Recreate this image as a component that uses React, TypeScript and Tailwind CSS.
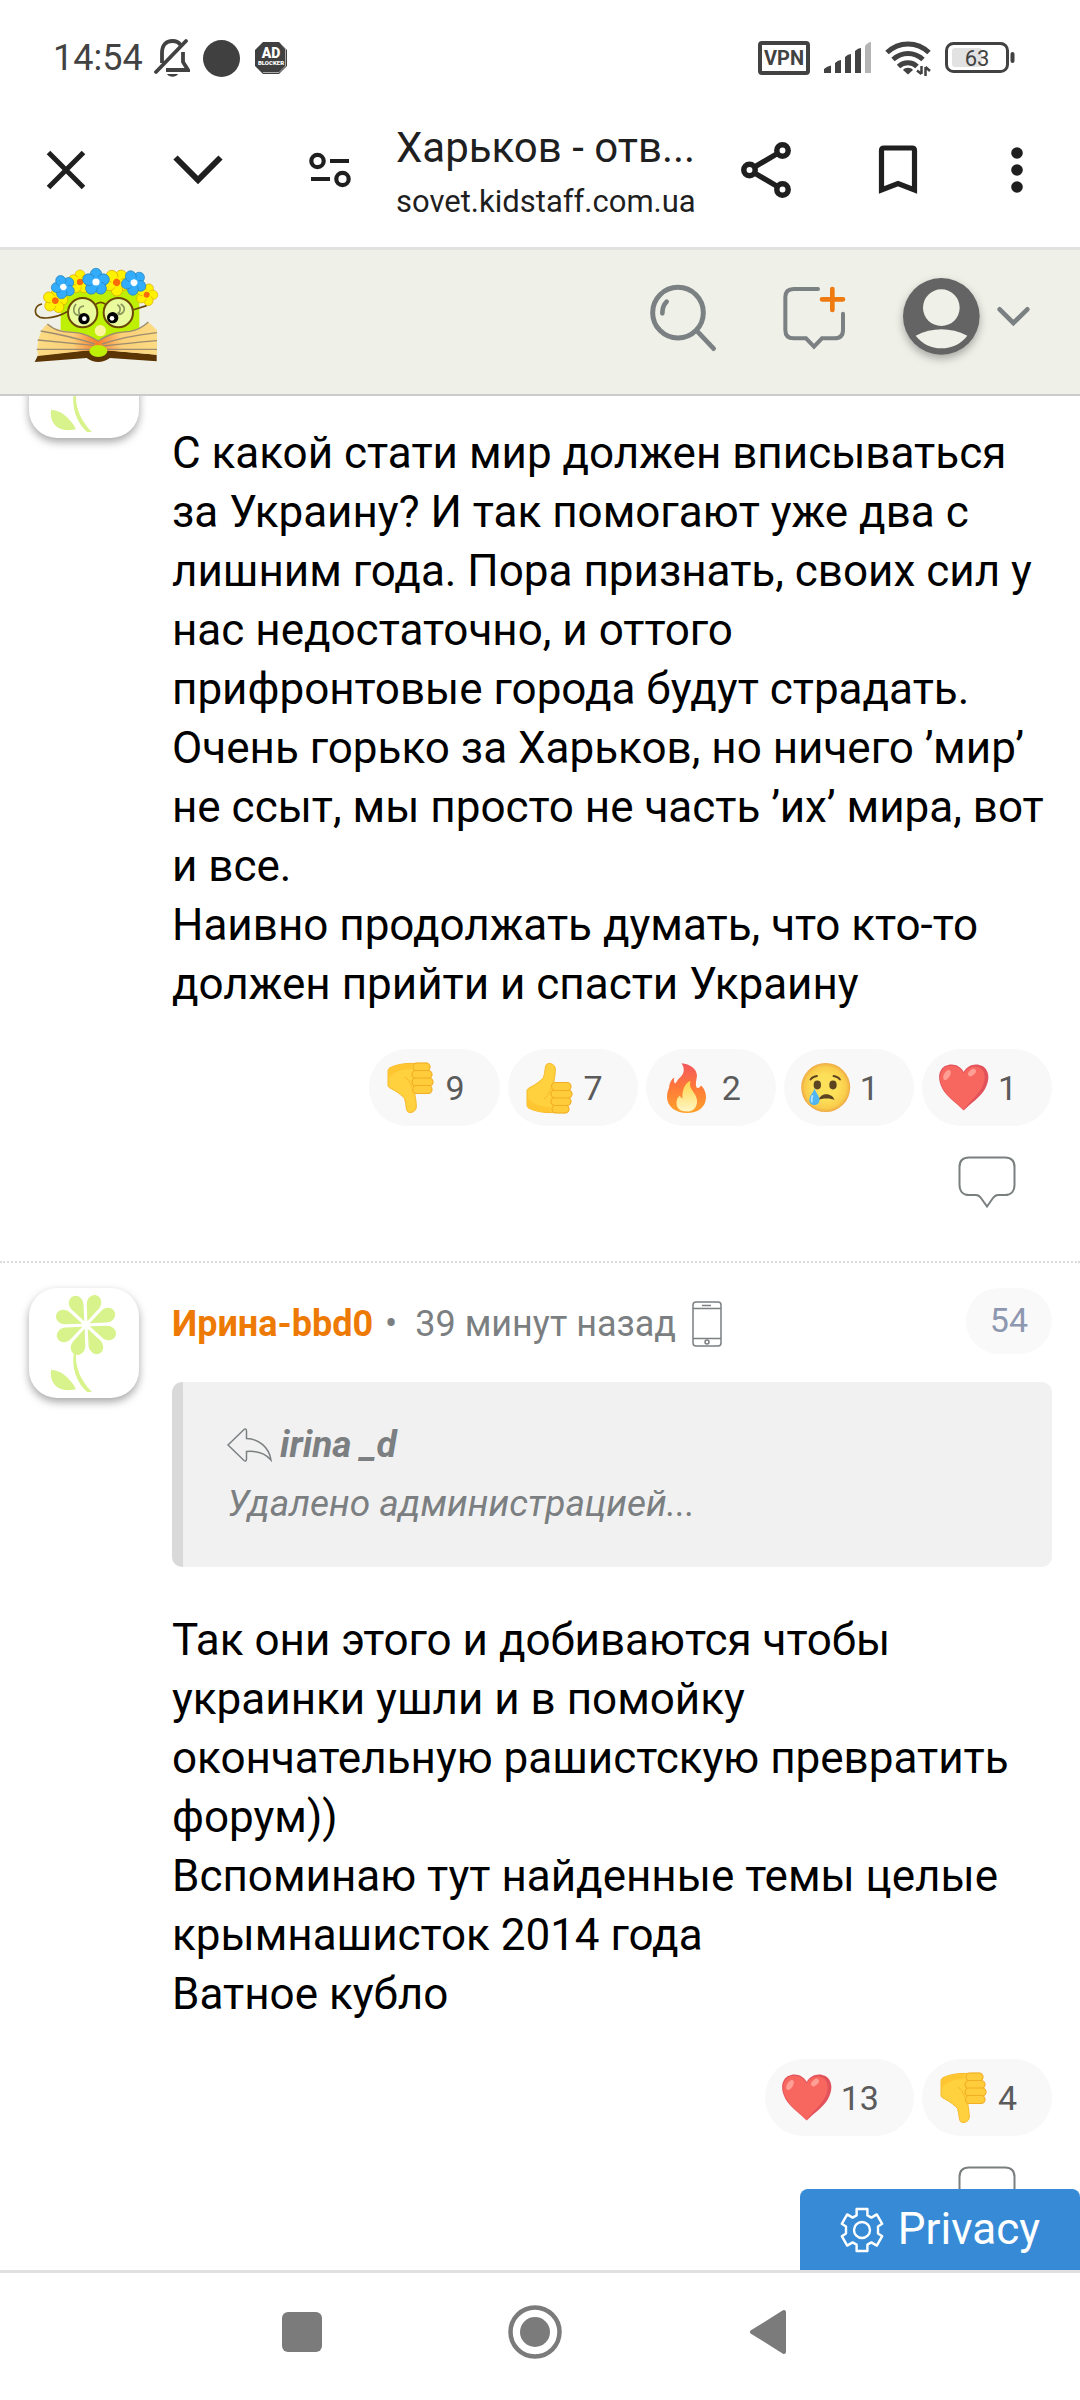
import React from 'react';

/* ---------- Reaction icons ---------- */

const ThumbIcon: React.FC<{ down?: boolean }> = ({ down }) => (
  <svg viewBox="0 0 52 52" className={down ? 'w-[52px] h-[52px] -scale-y-100' : 'w-[52px] h-[52px]'}>
    <path
      d="M3 29C3 27 4 26.500 6 25.500C12 22.500 17 18.500 19.500 15.500C20.500 12 21 9 21.300 5.500C21.800 2.200 23.500 1.200 26 1.500C29.500 2 31.300 4.500 31.300 7C31.300 12 30.500 16 29.700 21L30 46L42 50.800L22 50.500C15 50 8 48 4.500 46C3.200 45 3 44 3 42Z"
      fill="#FFD13F" stroke="#F7B92B" strokeWidth="1"
    />
    <path d="M3.500 36C9 42 16 45 26 45L27 50L17 50C11 49 6 47 4 45Z" fill="#FFC632" />
    <g fill="#FFCC3B" stroke="#F2AE24" strokeWidth="1.200">
      <rect x="28" y="43" width="17" height="8" rx="4" />
      <rect x="27" y="35.500" width="20" height="8" rx="4" />
      <rect x="27" y="28" width="21" height="8" rx="4" />
      <rect x="27.500" y="20.500" width="19.500" height="8" rx="4" />
    </g>
    <path d="M28 25C25 29 26 33 20 37" fill="none" stroke="#F8BE33" strokeWidth="1.200" />
  </svg>
);

const FireIcon = () => (
  <svg viewBox="0 0 52 52" className="w-[52px] h-[52px]">
    <defs>
      <linearGradient id="flame" x1="0" y1="0" x2="0" y2="1">
        <stop offset="0" stopColor="#F4585D" />
        <stop offset="0.500" stopColor="#FF7A38" />
        <stop offset="1" stopColor="#FFA32B" />
      </linearGradient>
      <linearGradient id="flameCore" x1="0" y1="0" x2="0" y2="1">
        <stop offset="0" stopColor="#FFD54A" />
        <stop offset="1" stopColor="#FFF6C4" />
      </linearGradient>
    </defs>
    <path
      d="M19.500 1.300C28 2 35 7 35 14C34.500 18 33 22 34.500 25.500C36.500 26.500 38 25.500 39 23.500C42 26 44.300 31 44 36C43.500 45 36 51 25 51C13 51 5 44 5 35C5 31 6 28 7 26C7.500 21 9 17.500 12.300 15.500C11.500 19 12 20.500 13.200 21.500C15 20 15 18 18 15.500C23 11 22.500 6 19.500 1.300Z"
      fill="url(#flame)"
    />
    <path
      d="M28.500 18.800C27 25 29.500 27 32 31C34 34 35.500 37 35 41C34 47 30 49.500 25 49.500C18 49.500 14.500 46 14.500 41C14.500 37 16 35 18 33.500C18.500 35 19 36 20.500 36.500C20 29 22 22 28.500 18.800Z"
      fill="url(#flameCore)"
    />
  </svg>
);

const CryIcon = () => (
  <svg viewBox="0 0 52 52" className="w-[52px] h-[52px]">
    <defs>
      <radialGradient id="face">
        <stop offset="0.500" stopColor="#FDE05A" />
        <stop offset="0.850" stopColor="#F9CC4B" />
        <stop offset="1" stopColor="#EFA945" />
      </radialGradient>
    </defs>
    <circle cx="25.700" cy="25.500" r="24.500" fill="url(#face)" />
    <g fill="#5C4322">
      <ellipse cx="17.300" cy="23" rx="3.700" ry="4.400" />
      <ellipse cx="33" cy="23" rx="3.700" ry="4.400" />
    </g>
    <g fill="none" stroke="#5C4322" strokeWidth="1.800" strokeLinecap="round">
      <path d="M10.500 17.500C12 15.500 14 14.300 17 14" />
      <path d="M33.500 14C36.500 14.300 38.500 15.500 40 17.500" />
    </g>
    <path d="M18.500 38C20 34 23 32.300 26.500 32.300C30 32.300 33.500 34.500 34.500 38C32 36.800 29 36.300 26 36.500C23 36.500 20.500 37 18.500 38Z" fill="#5C4322" />
    <path d="M14.500 26.500C16 31 19.500 34 19.500 38C19.500 41 17 43 14.300 43C11.500 43 9.300 41 9.300 38C9.300 34 13 31 14.500 26.500Z" fill="#4FB6F2" />
    <path d="M12.500 34C11.500 36 11 37.500 12 39.500" stroke="#B5E1FB" strokeWidth="1.800" strokeLinecap="round" fill="none" />
  </svg>
);

const HeartIcon = () => (
  <svg viewBox="0 0 52 52" className="w-[52px] h-[52px]">
    <path
      d="M25.700 48.500C19 41.500 9 35 4.500 27C-1 17 0.500 8 7 4C14 0.500 22 3 25.700 10C29.500 3 37.500 0.500 44.500 4C51 8 52.500 17 47 27C42.500 35 32.500 41.500 25.700 48.500Z"
      fill="#E2525A"
    />
    <path
      d="M25.700 48C19 41 9.500 35 5 26.500C0.500 17 1.500 9 7.500 5C14 2 22 4.500 25.500 11.500C29.500 5 36 3 41.500 5.500C48 9 48 18 44 25.500C39.500 34 31 40 25.700 48Z"
      fill="#F8675F"
    />
    <g fill="#FF9E94">
      <ellipse cx="9" cy="13" rx="3" ry="5.500" transform="rotate(32 9 13)" />
      <ellipse cx="34" cy="10.500" rx="2.800" ry="4.600" transform="rotate(48 34 10.500)" />
    </g>
  </svg>
);

type ReactionKind = 'down' | 'up' | 'fire' | 'cry' | 'heart';

const reactionIcons: Record<ReactionKind, React.ReactNode> = {
  down: <ThumbIcon down />,
  up: <ThumbIcon />,
  fire: <FireIcon />,
  cry: <CryIcon />,
  heart: <HeartIcon />,
};

const Reactions: React.FC<{ items: { kind: ReactionKind; count: number }[] }> = ({ items }) => (
  <div className="mt-[35px] flex justify-end gap-2">
    {items.map(({ kind, count }) => (
      <button
        key={kind}
        className="flex h-[77px] items-center gap-2 rounded-full bg-[#f8f8f8] pl-4 pr-[35px] text-[34px] leading-10 text-[#5b5b5b]"
      >
        {reactionIcons[kind]}
        <span>{count}</span>
      </button>
    ))}
  </div>
);

const ReplyButton = () => (
  <div className="mt-[30px] flex justify-end pr-9">
    <button aria-label="Ответить">
      <svg viewBox="0 0 58 53" className="h-[53px] w-[58px]" fill="none" stroke="#7a7f80" strokeWidth="2">
        <path d="M11 1.500H47C53 1.500 56.500 5 56.500 11V29C56.500 35 53 39 47 39H40C37.500 39 36.500 40 35 42L29 50.500L23 42C21.500 40 20.500 39 18 39H11C5 39 1.500 35 1.500 29V11C1.500 5 5 1.500 11 1.500Z" />
      </svg>
    </button>
  </div>
);

/* ---------- Post ---------- */

const FlowerAvatar = () => (
  <a
    href="#user"
    aria-label="Профиль"
    className="block h-[110px] w-[110px] shrink-0 overflow-hidden rounded-[28px] bg-white shadow-[0_4px_8px_rgba(0,0,0,0.35)]"
  >
    <svg viewBox="0 0 110 110" className="h-[110px] w-[110px]" fill="#d8f28c">
      <g transform="translate(57 37)">
        {[6, 51, 96, 141, 186, 231, 276, 321].map((deg) => (
          <path key={deg} transform={`rotate(${deg + 14})`} d="M0 -4L-6.500 -20C-8.500 -26 -5 -31.500 0 -31.500C5 -31.500 8.500 -26 6.500 -20Z" />
        ))}
      </g>
      <path d="M45 64C42 80 48 95 58 104H63C52 93 46 80 47 64Z" />
      <path d="M22 82C32 82 41 90 47 101C34 105 20 99 22 82Z" />
    </svg>
  </a>
);

const Post: React.FC<{ className?: string; head?: React.ReactNode; children: React.ReactNode }> = ({
  className = '',
  head,
  children,
}) => (
  <article className={`flex gap-[33px] border-b-2 border-dotted border-[#dcdcdc] pl-[29px] pr-7 pt-[25px] pb-[52px] ${className}`}>
    <FlowerAvatar />
    <div className="min-w-0 flex-1">
      <div className="mb-7 flex h-[66px] items-center">{head}</div>
      {children}
    </div>
  </article>
);

/* ---------- Bars ---------- */

const StatusBar = () => (
  <div className="flex h-[92px] items-center justify-between pl-[53px] pr-[65px] pt-6 text-[#424242]">
    <div className="flex items-center">
      <span className="text-[36px] leading-10">14:54</span>
      <svg viewBox="0 0 36 40" className="ml-[11px] h-10 w-9" fill="none" stroke="#424242" strokeWidth="3.800">
        <path d="M8 25V15C8 7 12 3 18.500 3C22 3 25 4.500 26.500 7M29 14V24L34 32H12" />
        <path d="M2 34L32 3" strokeLinecap="round" />
        <path d="M13 36H24C22 39.500 15 39.500 13 36Z" fill="#424242" stroke="none" />
      </svg>
      <span className="ml-[13px] h-[37px] w-[37px] rounded-full bg-[#404040]" />
      <svg viewBox="0 0 34 34" className="ml-[14px] h-[34px] w-[34px]">
        <path d="M9 1H25L33 9V25L25 33H9L1 25V9Z" fill="#404040" />
        <path d="M27 3L31.500 8V25L25 31.500H9" fill="none" stroke="#c8c8c8" strokeWidth="0.800" />
        <text x="17" y="16.500" textAnchor="middle" fill="#fff" fontSize="14" fontWeight="900" fontFamily="Roboto">AD</text>
        <text x="17" y="24" textAnchor="middle" fill="#fff" fontSize="6" fontWeight="900" fontFamily="Roboto">BLOCKER</text>
      </svg>
    </div>
    <div className="flex items-center">
      <span className="flex h-[34px] w-[52px] items-center justify-center rounded-[4px] border-4 border-[#424242] text-[20px] font-bold leading-6">
        VPN
      </span>
      <svg viewBox="0 0 48 32" className="ml-[14px] h-8 w-12" fill="#424242">
        <path d="M0 31V27Q3 24 7 23.500V31Z" />
        <path d="M11 31V21Q14 18 17 18V31Z" />
        <path d="M21 31V15Q24 12 27 12V31Z" />
        <path d="M31 31V9Q34 6 37 6V31Z" />
        <path d="M41 31V4Q44 0 47 0V31Z" fill="#b5b5b5" />
      </svg>
      <svg viewBox="0 0 46 36" className="ml-[13px] h-9 w-[46px]" fill="none" stroke="#424242" strokeWidth="5">
        <path d="M2 12.500C14 1 32 1 44 12.500" />
        <path d="M8 19.500C17 11.500 29 11.500 38 19.500" />
        <path d="M13.500 26.500C19 21.500 27 21.500 32 26.500" />
        <path d="M18 30C20 27 26 27 28 30L23 34.500Z" fill="#424242" stroke="none" />
        <path d="M36.500 26V34M36.500 34L32 30.500M40.500 36V27M40.500 27L45 31" strokeWidth="2.500" />
      </svg>
      <svg viewBox="0 0 70 32" className="ml-[14px] h-8 w-[70px]">
        <rect x="1.500" y="1.500" width="61" height="28" rx="7" fill="none" stroke="#424242" strokeWidth="3" />
        <rect x="7" y="6" width="30" height="19" rx="3" fill="#e2e2e2" />
        <rect x="65.500" y="10" width="4" height="11" rx="2" fill="#424242" />
        <text x="32" y="23.500" textAnchor="middle" fill="#424242" fontSize="22" fontFamily="Roboto">63</text>
      </svg>
    </div>
  </div>
);

const BrowserBar = () => (
  <div className="flex h-[158px] items-center border-b-[3px] border-[#e1e1df] pr-2 text-[#1f1f1f]">
    <button aria-label="Закрыть" className="flex w-[132px] shrink-0 justify-center">
      <svg viewBox="0 0 40 40" className="h-10 w-10" stroke="currentColor" strokeWidth="5">
        <path d="M2.500 2.500L37.500 37.500M37.500 2.500L2.500 37.500" />
      </svg>
    </button>
    <button aria-label="Свернуть" className="flex w-[132px] shrink-0 justify-center">
      <svg viewBox="0 0 50 30" className="h-[30px] w-[50px]" fill="none" stroke="currentColor" strokeWidth="6">
        <path d="M2.500 2.500L25 25L47.500 2.500" />
      </svg>
    </button>
    <button aria-label="Сведения о сайте" className="flex w-[132px] shrink-0 justify-center">
      <svg viewBox="0 0 42 36" className="h-9 w-[42px]" fill="none" stroke="currentColor" strokeWidth="4.200">
        <circle cx="8.500" cy="9" r="6.200" />
        <path d="M21 9H40M2 27H21" />
        <circle cx="33.500" cy="27" r="6.200" />
      </svg>
    </button>
    <div className="min-w-0 flex-1 whitespace-nowrap pt-2">
      <div className="text-[42px] leading-[56px]">Харьков - отв...</div>
      <div className="text-[31px] leading-[52px]">sovet.kidstaff.com.ua</div>
    </div>
    <button aria-label="Поделиться" className="flex w-[132px] shrink-0 justify-center">
      <svg viewBox="0 0 50 56" className="h-14 w-[50px]" fill="none" stroke="currentColor" strokeWidth="5.500">
        <circle cx="41.500" cy="8.500" r="5.700" />
        <circle cx="8.500" cy="28" r="5.700" />
        <circle cx="41.500" cy="47.500" r="5.700" />
        <path d="M13.500 25L36.500 11.500M13.500 31L36.500 44.500" />
      </svg>
    </button>
    <button aria-label="Добавить в закладки" className="flex w-[132px] shrink-0 justify-center">
      <svg viewBox="0 0 40 50" className="h-[50px] w-10" fill="none" stroke="currentColor" strokeWidth="5.200">
        <path d="M3.500 45V5.500Q3.500 3 6 3H34Q36.500 3 36.500 5.500V45L20 38.500Z" />
      </svg>
    </button>
    <button aria-label="Ещё" className="flex w-[108px] shrink-0 justify-center pr-[3px]">
      <svg viewBox="0 0 12 46" className="h-[46px] w-3" fill="currentColor">
        <circle cx="6" cy="6" r="5.800" />
        <circle cx="6" cy="23" r="5.800" />
        <circle cx="6" cy="40" r="5.800" />
      </svg>
    </button>
  </div>
);

const flowers: { x: number; y: number; size: number; blue: boolean; turn: number }[] = [
  { x: 76, y: 122, size: 1, blue: false, turn: 10 },
  { x: 150, y: 66, size: 0.95, blue: false, turn: 0 },
  { x: 350, y: 104, size: 0.88, blue: false, turn: 20 },
  { x: 260, y: 67, size: 1.08, blue: false, turn: 35 },
  { x: 100, y: 81, size: 0.95, blue: true, turn: 50 },
  { x: 312, y: 68, size: 1, blue: true, turn: 45 },
  { x: 198, y: 66, size: 1.08, blue: true, turn: 0 },
];

const Logo = () => (
  <svg viewBox="0 0 405 372" className="h-[124px] w-[135px]">
    <defs>
      <linearGradient id="page" x1="0" x2="1">
        <stop offset="0" stopColor="#fbdc84" />
        <stop offset="0.300" stopColor="#fbcf78" />
        <stop offset="0.500" stopColor="#f97b2c" />
        <stop offset="0.700" stopColor="#fbcf78" />
        <stop offset="1" stopColor="#fbdc84" />
      </linearGradient>
    </defs>
    <path d="M92 100Q210 60 328 100V240H92Z" fill="#bdf004" />
    <path d="M14 306L24 286L200 268L380 284V304L240 294Q204 318 170 294Z" fill="#5b3504" />
    <path d="M24 288C18 250 28 210 52 192C100 226 150 204 205 243C255 208 320 226 355 186L381 210V284L240 272H165Z" fill="url(#page)" />
    <g fill="none" stroke="#9c8c70" strokeWidth="4">
      <path d="M52 192C80 216 100 216 140 218C170 222 190 234 205 243C250 214 270 218 300 214C325 210 340 200 355 186" />
      <path d="M32 213Q120 228 195 252M23 240Q110 248 190 256M20 268H180" />
      <path d="M381 218Q290 228 216 252M381 242Q290 250 220 258M381 268H230" />
    </g>
    <ellipse cx="205" cy="273" rx="27" ry="18" fill="#bdf004" />
    <g fill="#e9fb9c" stroke="#6b4708" strokeWidth="6">
      <circle cx="158" cy="158" r="44" />
      <circle cx="265" cy="158" r="44" />
    </g>
    <g fill="none" stroke="#6b4708" strokeWidth="5">
      <path d="M196 134Q212 120 228 134M308 150L350 137M114 154Q70 180 30 172C8 162 14 136 36 132" />
    </g>
    <g fill="none" stroke="#87945c" strokeWidth="5">
      <path d="M138 132C124 152 134 166 148 166M162 138C142 140 142 160 156 168" />
      <path d="M262 134C276 142 270 160 262 160M272 132C290 142 284 162 264 164" />
    </g>
    <circle cx="162" cy="176" r="17" fill="#000" />
    <circle cx="248" cy="173" r="17" fill="#000" />
    <circle cx="163" cy="176" r="7" fill="#fff" />
    <circle cx="246" cy="175" r="7" fill="#fff" />
    <circle cx="211" cy="212" r="17" fill="#fdf59b" />
    {flowers.map((f) => (
      <g key={f.x} transform={`translate(${f.x} ${f.y}) rotate(${f.turn}) scale(${f.size})`}>
        {[0, 72, 144, 216, 288].map((a) => (
          <ellipse
            key={a}
            cy="-21"
            rx="16"
            ry="17"
            transform={`rotate(${a})`}
            fill={f.blue ? '#33adfb' : '#fff200'}
            stroke={f.blue ? '#2480b8' : '#d9a800'}
            strokeWidth="2"
          />
        ))}
        <circle r="15" fill={f.blue ? '#33adfb' : '#fff200'} />
        <circle r="10" fill={f.blue ? '#fff' : '#fb6a0a'} />
      </g>
    ))}
  </svg>
);

const SiteHeader = () => (
  <header className="flex h-[146px] items-center border-b-2 border-[#cbcbcb] bg-[#eff0e8] pl-[30px] pr-12">
    <a href="#home" aria-label="Kidstaff">
      <Logo />
    </a>
    <nav className="ml-auto flex items-center">
      <button aria-label="Поиск">
        <svg viewBox="84 132 216 228" className="h-[76px] w-[72px]" fill="none" stroke="#7b8082" strokeLinecap="round">
          <circle cx="174" cy="218" r="76" strokeWidth="15" />
          <path d="M232 274L281 326" strokeWidth="14" />
          <path d="M127 220Q127 198 140 185" strokeWidth="14" />
        </svg>
      </button>
      <button aria-label="Новая тема" className="ml-[60px]">
        <svg viewBox="480 132 204 228" className="h-[76px] w-[68px]" fill="none" strokeWidth="12" strokeLinecap="round">
          <path
            d="M594 147H521Q496 147 496 172V270Q496 295 521 295H558L582 320L606 295H643Q669 295 669 270V221"
            stroke="#7b8082"
          />
          <path d="M637 147V210M606 178H669" stroke="#ee7a10" strokeWidth="14" />
        </svg>
      </button>
      <button aria-label="Меню пользователя" className="ml-[52px] flex items-center gap-3">
        <svg viewBox="840 132 246 228" className="h-[76px] w-[82px] overflow-visible drop-shadow-[0_4px_4px_rgba(0,0,0,0.3)]">
          <circle cx="964" cy="229" r="115" fill="#646464" />
          <circle cx="964" cy="203" r="55" fill="#eff0e8" />
          <path d="M887 287Q964 249 1042 287C1022 312 996 325 964 325C932 325 908 312 887 287Z" fill="#eff0e8" />
        </svg>
        <svg viewBox="1122 132 114 228" className="h-[76px] w-[38px]" fill="none" stroke="#7b8082" strokeWidth="14" strokeLinecap="round">
          <path d="M1139 208L1180 249L1222 208" />
        </svg>
      </button>
    </nav>
  </header>
);

const NavBar = () => (
  <footer className="flex h-[130px] shrink-0 items-center border-t-[3px] border-[#e0e0e0] bg-white pb-[10px] pl-[186px] pr-[196px]">
    <button aria-label="Недавние" className="flex flex-1 justify-center">
      <span className="h-10 w-10 rounded-[6px] bg-[#7b7b7b]" />
    </button>
    <button aria-label="Домой" className="flex flex-1 justify-center">
      <svg viewBox="0 0 54 54" className="h-[54px] w-[54px]">
        <circle cx="27" cy="27" r="24.500" fill="none" stroke="#7b7b7b" strokeWidth="4.500" />
        <circle cx="27" cy="27" r="15" fill="#7b7b7b" />
      </svg>
    </button>
    <button aria-label="Назад" className="flex flex-1 justify-center">
      <svg viewBox="0 0 38 46" className="h-[46px] w-[38px]">
        <path d="M3 23L35 3V43Z" fill="#7b7b7b" stroke="#7b7b7b" strokeWidth="4" strokeLinejoin="round" />
      </svg>
    </button>
  </footer>
);

export default function App() {
  return (
    <div className="flex h-screen flex-col bg-white font-[Roboto,sans-serif]">
      <StatusBar />
      <BrowserBar />
      <SiteHeader />

      <main className="relative min-h-0 flex-1 overflow-hidden text-[44px] leading-[59px] text-black">
        {/* First post is partly scrolled under the header */}
        <Post className="-mt-[93px]">
          <p className="pt-[2px]">
            С какой стати мир должен вписываться за Украину? И так помогают уже два с лишним года. Пора признать,
            своих сил у нас недостаточно, и оттого прифронтовые города будут страдать. Очень горько за Харьков, но
            ничего ’мир’ не ссыт, мы просто не часть ’их’ мира, вот и все.
            <br />
            Наивно продолжать думать, что кто-то должен прийти и спасти Украину
          </p>
          <Reactions
            items={[
              { kind: 'down', count: 9 },
              { kind: 'up', count: 7 },
              { kind: 'fire', count: 2 },
              { kind: 'cry', count: 1 },
              { kind: 'heart', count: 1 },
            ]}
          />
          <ReplyButton />
        </Post>

        <Post
          head={
            <div className="flex w-full items-center text-[36px] leading-[60px] text-[#7b7f81]">
              <div className="flex items-center pt-[6px]">
                <a href="#irina" className="font-bold text-[#ee7a06]">
                  Ирина-bbd0
                </a>
                <span className="ml-3">•</span>
                <span className="ml-[18px]">39 минут назад</span>
                <svg viewBox="0 0 30 46" className="ml-4 h-[46px] w-[30px]" fill="none" stroke="#7b7f81" strokeWidth="1.500">
                  <rect x="1" y="1" width="28" height="44" rx="3" />
                  <path d="M1 7.500H29M1 37.500H29M10 4.500H19" />
                  <circle cx="15" cy="41" r="2" />
                </svg>
              </div>
              <span className="ml-auto h-[66px] rounded-full bg-[#f9f9f9] px-6 text-[34px] leading-[64px] text-[#8d97b0]">
                54
              </span>
            </div>
          }
        >
          <blockquote className="mb-[42px] rounded-[10px] border-l-[11px] border-[#d9d9d9] bg-[#f1f1f1] px-11 pb-[34px] pt-[33px] text-[37px] italic leading-[59px] text-[#7b7f81]">
            <div className="flex items-center gap-2 font-bold">
              <svg viewBox="0 0 45 34" className="h-[34px] w-[45px]" fill="none" stroke="#7b7f81" strokeWidth="1.500">
                <path d="M1 17L17 1.500C18.500 0.500 19.500 1 19.500 3V10.500C32 11 42 19 44 32C38 25 30 22.500 19.500 23.500V31C19.500 33 18.500 33.500 17 32.500Z" />
              </svg>
              irina _d
            </div>
            <div>Удалено администрацией...</div>
          </blockquote>
          <p className="pt-[2px]">
            Так они этого и добиваются чтобы украинки ушли и в помойку окончательную рашистскую превратить форум))
            <br />
            Вспоминаю тут найденные темы целые крымнашисток 2014 года
            <br />
            Ватное кубло
          </p>
          <Reactions
            items={[
              { kind: 'heart', count: 13 },
              { kind: 'down', count: 4 },
            ]}
          />
          <ReplyButton />
        </Post>

        <button className="absolute bottom-0 right-0 flex h-[81px] items-center gap-3 rounded-t-[8px] bg-[#378bd6] pl-[38px] pr-10 text-white">
          <svg viewBox="0 0 24 24" className="h-12 w-12" fill="none" stroke="currentColor" strokeWidth="1.200" strokeLinejoin="round">
            <path d="M9.300 1.500h5.400v3.200l2 1.100 2.700-1.600 2.700 4.700-2.100 1.400v3.400l2.100 1.400-2.700 4.700-2.700-1.600-2 1.100v3.200H9.300v-3.200l-2-1.100-2.700 1.600-2.700-4.700L4 13.700v-3.400L1.900 8.900l2.700-4.700 2.700 1.600 2-1.100z" />
            <circle cx="12" cy="12" r="4" />
          </svg>
          Privacy
        </button>
      </main>

      <NavBar />
    </div>
  );
}
